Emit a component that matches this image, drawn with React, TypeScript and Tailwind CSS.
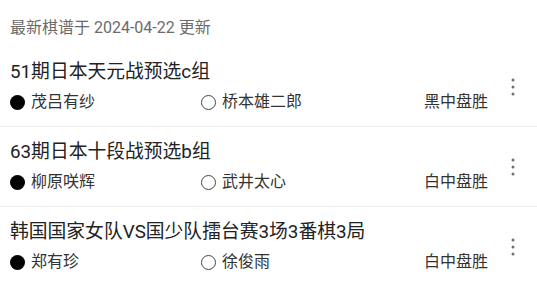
import React from "react";

const games = [
  { title: "51期日本天元战预选c组", black: "茂吕有纱", white: "桥本雄二郎", result: "黑中盘胜" },
  { title: "63期日本十段战预选b组", black: "柳原咲辉", white: "武井太心", result: "白中盘胜" },
  { title: "韩国国家女队VS国少队擂台赛3场3番棋3局", black: "郑有珍", white: "徐俊雨", result: "白中盘胜" },
];

function Dots() {
  return (
    <svg width="6" height="18" viewBox="0 0 6 18" className="text-[#707070]">
      <circle cx="3" cy="2" r="1.5" fill="currentColor" />
      <circle cx="3" cy="9" r="1.5" fill="currentColor" />
      <circle cx="3" cy="16" r="1.5" fill="currentColor" />
    </svg>
  );
}

export default function App() {
  return (
    <div
      className="w-[537px] h-[284px] bg-white overflow-hidden"
      style={{ fontFamily: "Roboto, 'Noto Sans CJK SC', sans-serif" }}
    >
      <div className="pt-[17px] pb-[8px] px-[10px] text-[16px] leading-[22px] text-[#6b6b6b]">
        最新棋谱于 2024-04-22 更新
      </div>
      {games.map((g, i) => (
        <div key={i} className="flex items-center border-b border-[#f0f0f0]">
          <div className="flex-1 pl-[10px] pt-[13px] pb-[13px]">
            <div className="text-[18.8px] leading-[24px] text-[#222] whitespace-nowrap">{g.title}</div>
            <div className="mt-[7px] grid grid-cols-[191px_1fr_auto] items-center text-[16px] leading-[22px] text-[#333]">
              <div className="flex items-center gap-[6px]">
                <span className="shrink-0 w-[15px] h-[15px] rounded-full bg-black" />
                <span>{g.black}</span>
              </div>
              <div className="flex items-center gap-[6px]">
                <span className="shrink-0 w-[15px] h-[15px] rounded-full border border-[#444]" />
                <span>{g.white}</span>
              </div>
              <div className="pr-[1px]">{g.result}</div>
            </div>
          </div>
          <div className="w-[48px] flex justify-center">
            <Dots />
          </div>
        </div>
      ))}
    </div>
  );
}
